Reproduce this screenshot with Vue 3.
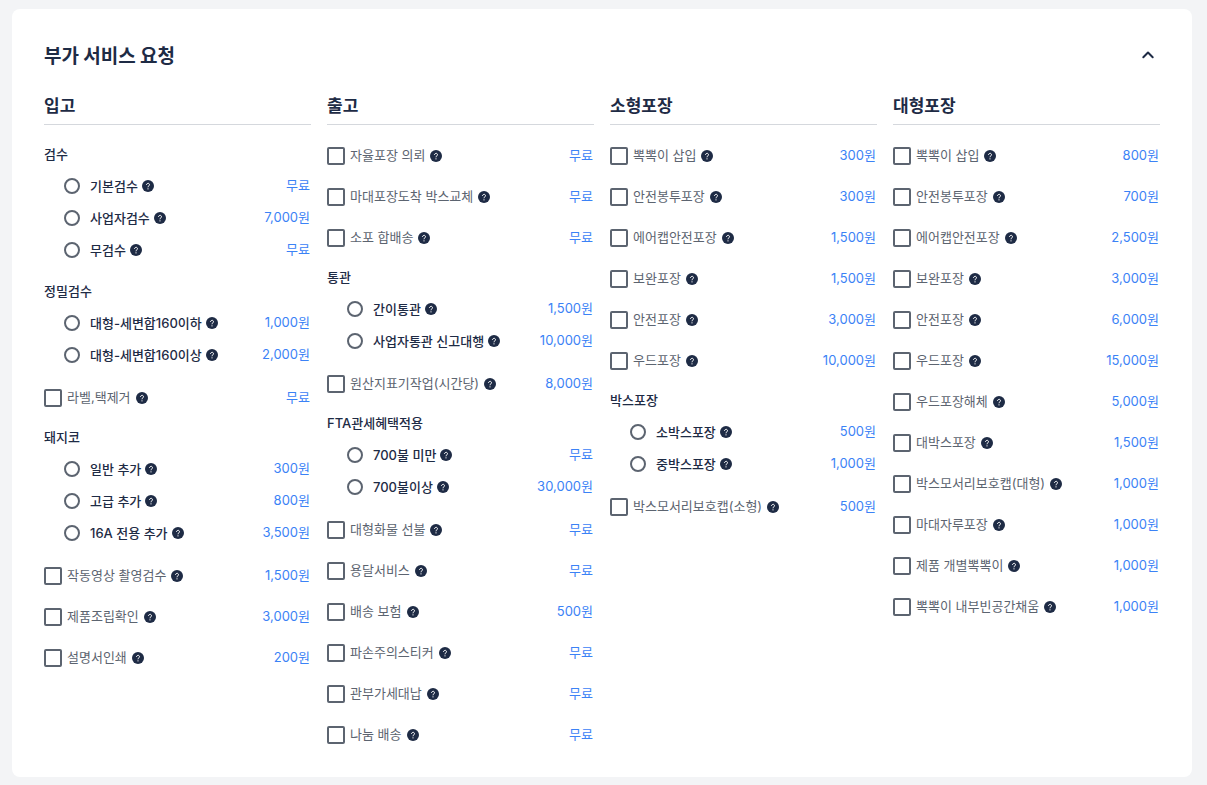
<script setup>
import { ref } from 'vue'

const open = ref(true)

const check = (name, price) => ({ name, price })
const group = (name, ...options) => ({
  name,
  options: options.map(([label, price]) => ({ name: label, price })),
})

const columns = [
  {
    title: '입고',
    items: [
      group('검수', ['기본검수', '무료'], ['사업자검수', '7,000원'], ['무검수', '무료']),
      group('정밀검수', ['대형-세변합160이하', '1,000원'], ['대형-세변합160이상', '2,000원']),
      check('라벨,택제거', '무료'),
      group('돼지코', ['일반 추가', '300원'], ['고급 추가', '800원'], ['16A 전용 추가', '3,500원']),
      check('작동영상 촬영검수', '1,500원'),
      check('제품조립확인', '3,000원'),
      check('설명서인쇄', '200원'),
    ],
  },
  {
    title: '출고',
    items: [
      check('자율포장 의뢰', '무료'),
      check('마대포장도착 박스교체', '무료'),
      check('소포 합배송', '무료'),
      group('통관', ['간이통관', '1,500원'], ['사업자통관 신고대행', '10,000원']),
      check('원산지표기작업(시간당)', '8,000원'),
      group('FTA관세혜택적용', ['700불 미만', '무료'], ['700불이상', '30,000원']),
      check('대형화물 선불', '무료'),
      check('용달서비스', '무료'),
      check('배송 보험', '500원'),
      check('파손주의스티커', '무료'),
      check('관부가세대납', '무료'),
      check('나눔 배송', '무료'),
    ],
  },
  {
    title: '소형포장',
    items: [
      check('뽁뽁이 삽입', '300원'),
      check('안전봉투포장', '300원'),
      check('에어캡안전포장', '1,500원'),
      check('보완포장', '1,500원'),
      check('안전포장', '3,000원'),
      check('우드포장', '10,000원'),
      group('박스포장', ['소박스포장', '500원'], ['중박스포장', '1,000원']),
      check('박스모서리보호캡(소형)', '500원'),
    ],
  },
  {
    title: '대형포장',
    items: [
      check('뽁뽁이 삽입', '800원'),
      check('안전봉투포장', '700원'),
      check('에어캡안전포장', '2,500원'),
      check('보완포장', '3,000원'),
      check('안전포장', '6,000원'),
      check('우드포장', '15,000원'),
      check('우드포장해체', '5,000원'),
      check('대박스포장', '1,500원'),
      check('박스모서리보호캡(대형)', '1,000원'),
      check('마대자루포장', '1,000원'),
      check('제품 개별뽁뽁이', '1,000원'),
      check('뽁뽁이 내부빈공간채움', '1,000원'),
    ],
  },
]
</script>

<template>
  <main class="page">
    <section class="card">
      <header class="card-head">
        <h1>부가 서비스 요청</h1>
        <button type="button" class="toggle" aria-label="접기" :aria-expanded="open" @click="open = !open">
          <svg width="14" height="14" viewBox="0 0 14 14" fill="none" stroke="currentColor" stroke-width="2" stroke-linecap="round" stroke-linejoin="round">
            <path d="M2.3 9.2 7 4.5l4.7 4.7" />
          </svg>
        </button>
      </header>

      <div v-if="open" class="columns">
        <section v-for="(col, c) in columns" :key="col.title" class="column">
          <h2>{{ col.title }}</h2>
          <ul class="items">
            <li v-for="(item, i) in col.items" :key="item.name" class="item">
              <fieldset v-if="item.options" class="group">
                <legend>{{ item.name }}</legend>
                <div v-for="(opt, o) in item.options" :key="opt.name" class="row radio-row">
                  <input :id="`o-${c}-${i}-${o}`" type="radio" :name="`g-${c}-${i}`" class="radio" />
                  <label :for="`o-${c}-${i}-${o}`">{{ opt.name }}</label>
                  <button type="button" class="help" :aria-label="`${opt.name} 도움말`">
                    <svg width="12" height="12" viewBox="0 0 12 12">
                      <circle cx="6" cy="6" r="6" fill="#1e2b45" />
                      <path d="M4.5 4.6a1.5 1.4 0 1 1 2.4 1.2c-.6.4-.9.6-.9 1.1" fill="none" stroke="#fff" stroke-width="1" stroke-linecap="round" />
                      <circle cx="6" cy="8.8" r=".65" fill="#fff" />
                    </svg>
                  </button>
                  <span class="price">{{ opt.price }}</span>
                </div>
              </fieldset>
              <div v-else class="row check-row">
                <input :id="`c-${c}-${i}`" type="checkbox" class="check" />
                <label :for="`c-${c}-${i}`">{{ item.name }}</label>
                <button type="button" class="help" :aria-label="`${item.name} 도움말`">
                  <svg width="12" height="12" viewBox="0 0 12 12">
                    <circle cx="6" cy="6" r="6" fill="#1e2b45" />
                    <path d="M4.5 4.6a1.5 1.4 0 1 1 2.4 1.2c-.6.4-.9.6-.9 1.1" fill="none" stroke="#fff" stroke-width="1" stroke-linecap="round" />
                    <circle cx="6" cy="8.8" r=".65" fill="#fff" />
                  </svg>
                </button>
                <span class="price">{{ item.price }}</span>
              </div>
            </li>
          </ul>
        </section>
      </div>
    </section>
  </main>
</template>

<style>
html {
  background: #f3f4f6;
}
</style>

<style scoped>
.page {
  padding: 9px 15px 8px 12px;
  font-family: Inter, "Noto Sans CJK KR", sans-serif;
  font-size: 13px;
  line-height: 20px;
  color: #1e2b45;
}

.card {
  padding: 32px 32px 28px;
  border-radius: 8px;
  background: #fff;
}

.card-head {
  display: flex;
  align-items: center;
  justify-content: space-between;
  height: 28px;
}

h1,
h2 {
  margin: 0;
  font-family: "Noto Sans CJK KR", sans-serif;
  font-weight: 700;
}

h1 {
  font-size: 19px;
  line-height: 28px;
}

h2 {
  padding-bottom: 7px;
  border-bottom: 1px solid #d5d8dd;
  font-size: 17px;
  line-height: 24px;
}

button {
  display: flex;
  padding: 0;
  border: 0;
  background: none;
  color: inherit;
  cursor: pointer;
}

.toggle {
  padding: 5px;
}

.columns {
  display: grid;
  grid-template-columns: repeat(4, minmax(0, 1fr));
  gap: 16px;
  margin-top: 24px;
}

.items {
  display: flex;
  flex-direction: column;
  gap: 16px;
  margin: 20px 0 0;
  padding: 0;
  list-style: none;
}

.group {
  min-width: 0;
  margin: 0;
  padding: 0;
  border: 0;
}

legend {
  padding: 0 0 7px;
  line-height: 18px;
  font-weight: 500;
}

.row {
  display: flex;
  align-items: center;
  white-space: nowrap;
}

.radio-row {
  height: 32px;
  padding-left: 20px;
  font-weight: 500;
}

.check-row {
  height: 22px;
  padding-bottom: 3px;
}

.check-row label {
  margin-left: 5px;
  padding-bottom: 2px;
  color: #5c6470;
}

.radio-row label {
  margin-left: 10px;
}

input {
  flex: none;
  appearance: none;
  box-sizing: border-box;
  margin: 0;
  border: 2px solid #5c6470;
  background: #fff;
}

.radio {
  width: 16px;
  height: 16px;
  border-radius: 50%;
}

.check {
  width: 18px;
  height: 18px;
  border-radius: 2px;
}

input:checked {
  border-color: #3b82f6;
  background: #3b82f6;
}

.help {
  margin-left: 4px;
}

.check-row .help {
  margin-left: 5px;
}

.price {
  margin-left: auto;
  padding: 0 1px 2px 0;
  font-weight: 400;
  color: #3b82f6;
}
</style>
